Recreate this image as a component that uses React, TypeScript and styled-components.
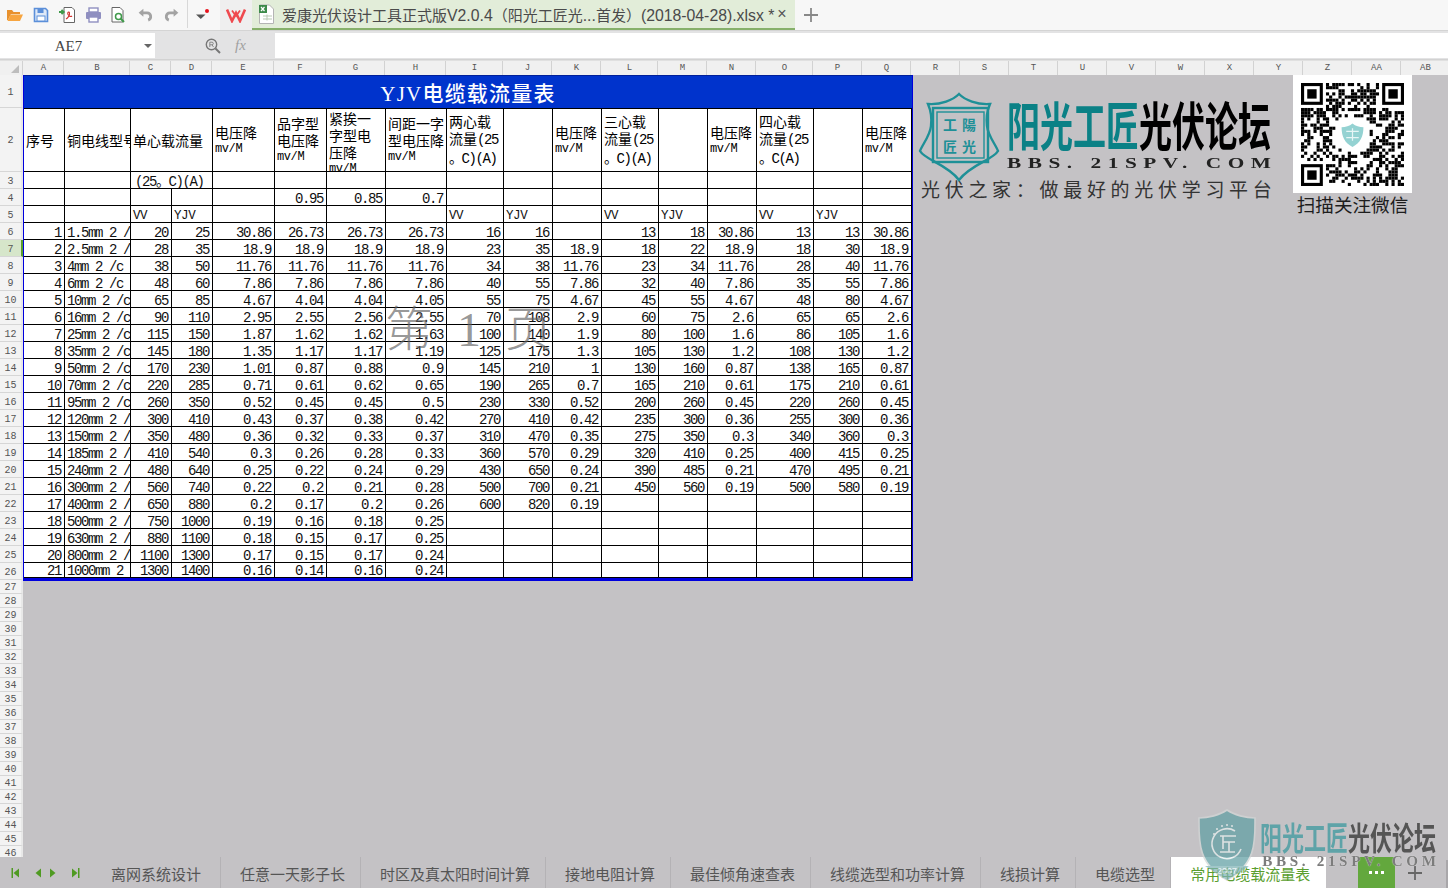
import { FC, ReactNode } from 'react';
import styled, { createGlobalStyle } from 'styled-components';

const CJK = '"Noto Sans CJK SC", "Liberation Sans", sans-serif';
const MONO = '"Liberation Mono", "Noto Sans CJK SC", monospace';
const CANVAS = '#c4c2c5';

const GlobalStyle = createGlobalStyle`
  html, body { margin: 0; padding: 0; overflow: hidden; background: ${CANVAS}; }
  * { box-sizing: border-box; }
`;

const Page = styled.div`
  position: relative;
  width: 1448px;
  height: 888px;
  display: flex;
  flex-direction: column;
  overflow: hidden;
  font-family: ${CJK};
`;

/* title bar */
const TitleBar = styled.div`
  height: 30px;
  flex: none;
  display: flex;
  align-items: stretch;
  padding-left: 2px;
  background: #f7f7f7;
`;

const IconSlot = styled.div<{ $wide?: boolean }>`
  width: ${(p) => (p.$wide ? 32 : 26)}px;
  display: flex;
  align-items: center;
  justify-content: center;
`;

const Separator = styled.div`
  width: 1px;
  margin: 0 0 2px 3px;
  background: #d8d8d8;
`;

const LogoSlot = styled.div`
  width: 32px;
  display: flex;
  align-items: center;
  justify-content: center;
  background: #efefef;
`;

const FileTab = styled.div`
  width: 543px;
  display: flex;
  align-items: center;
  padding-left: 6px;
  background: #e2edd9;
  border-bottom: 2px solid #86b06a;
`;

const FileName = styled.span`
  margin-left: 7px;
  font: 15px ${CJK};
  color: #4a4a4a;
  white-space: nowrap;
`;

const FileLatin = styled.span`
  font: 15.8px "Liberation Sans", sans-serif;
`;

const CloseMark = styled.span`
  margin-left: 3px;
  font: 16px "Liberation Sans", sans-serif;
  color: #555;
`;

const NewTab = styled.div`
  width: 32px;
  display: flex;
  align-items: center;
  justify-content: center;
`;

/* formula bar */
const FormulaBar = styled.div`
  height: 30px;
  flex: none;
  display: flex;
  padding: 2px 0 1px;
  background: #e3e3e4;
  border-top: 1px solid #d4d4d4;
  border-bottom: 1px solid #d2d2d2;
`;

const NameBox = styled.div`
  position: relative;
  width: 155px;
  background: #fff;
  text-align: center;
  padding-right: 18px;
  font: 15px/27px "Liberation Serif", serif;
  color: #444;
`;

const NameCaret = styled.span`
  position: absolute;
  right: 3px;
  top: 11px;
  border-left: 4px solid transparent;
  border-right: 4px solid transparent;
  border-top: 4px solid #666;
`;

const FormulaTools = styled.div`
  width: 120px;
  display: flex;
  align-items: center;
  padding-left: 50px;
  gap: 14px;
`;

const FxLabel = styled.span`
  font: italic 15px "Liberation Serif", serif;
  color: #a0a0a0;
`;

const FormulaInput = styled.div`
  flex: 1;
  background: #fff;
`;

/* sheet */
const HeaderRow = styled.div`
  height: 15px;
  flex: none;
  display: flex;
  overflow: hidden;
  background: #f0f0f0;
  border-top: 1px solid #e0e0e0;
`;

const Corner = styled.div`
  position: relative;
  width: 23px;
  flex: none;
  border-right: 1px solid #d2d2d2;
  &::after {
    content: '';
    position: absolute;
    right: 3px;
    bottom: 2px;
    border-left: 8px solid transparent;
    border-bottom: 8px solid #bdbdbd;
  }
`;

const ColumnLabel = styled.div<{ $width: number }>`
  width: ${(p) => p.$width}px;
  flex: none;
  padding-left: 1px;
  text-align: center;
  font: 9px/15px ${MONO};
  color: #555;
  border-right: 1px solid #d2d2d2;
`;

const SheetBody = styled.div`
  flex: 1;
  min-height: 0;
  display: flex;
`;

const Gutter = styled.div`
  width: 23px;
  flex: none;
  overflow: hidden;
  background: #f3f3f3;
`;

const RowLabel = styled.div<{ $height: number; $current?: boolean }>`
  height: ${(p) => p.$height}px;
  padding-top: 2px;
  display: flex;
  align-items: center;
  justify-content: center;
  font: 10px ${MONO};
  color: #555;
  background: ${(p) => (p.$current ? '#d6e6ca' : 'transparent')};
  border-bottom: 1px solid #d6d6d6;
  border-right: 2px solid ${(p) => (p.$current ? '#5aa02c' : '#e8e8e8')};
`;

const Canvas = styled.div`
  position: relative;
  flex: 1;
  overflow: hidden;
  background: ${CANVAS};
`;

const TableFrame = styled.div`
  width: 890px;
  background: #fff;
  border-left: 1px solid #0000dd;
  border-right: 2px solid #0000dd;
  border-bottom: 3px solid #0000dd;
`;

const Table = styled.table`
  width: 887px;
  table-layout: fixed;
  border-collapse: separate;
  border-spacing: 0;
  color: #000;
`;

const Row = styled.tr<{ $height: number }>`
  height: ${(p) => p.$height}px;
`;

const TitleCell = styled.td`
  height: 34px;
  padding: 0;
  text-align: center;
  vertical-align: middle;
  background: #0033cc;
  color: #fff;
  font: 500 21px "Liberation Serif", "Noto Sans CJK SC", serif;
  letter-spacing: 1.2px;
  border-top: 1px solid #00209a;
  border-bottom: 1px solid #000;
`;

const HeadCell = styled.td`
  padding: 0;
  border-right: 1px solid #000;
  border-bottom: 1px solid #000;
`;

const HeadBox = styled.div<{ $top?: boolean }>`
  height: 62px;
  padding: 1px 0 0 2px;
  display: flex;
  flex-direction: column;
  justify-content: ${(p) => (p.$top ? 'flex-start' : 'center')};
  overflow: hidden;
  white-space: nowrap;
  font: 14px/17px ${CJK};
`;

const Latin = styled.span`
  font-family: ${MONO};
  letter-spacing: -1.4px;
`;

const Unit = styled.span`
  font: 12px/17px ${MONO};
  letter-spacing: -0.4px;
`;

const Cell = styled.td<{ $align?: 'left' | 'right'; $indent?: number; $tag?: boolean }>`
  padding: 0 ${(p) => (p.$align === 'left' ? `0 0 ${p.$indent ?? 2}px` : '3px 0 0')};
  text-align: ${(p) => p.$align || 'right'};
  vertical-align: bottom;
  overflow: hidden;
  white-space: nowrap;
  font: ${(p) => (p.$tag ? 12.5 : 14)}px/12px ${MONO};
  letter-spacing: ${(p) => (p.$tag ? -0.4 : -1.4)}px;
  color: #111;
  border-right: 1px solid #000;
  border-bottom: 1px solid #000;
`;

/* free floating artwork on the canvas */
const BrandBlock = styled.div`
  position: absolute;
  left: 895px;
  top: 17px;
  width: 360px;
`;

const BrandRow = styled.div`
  display: flex;
  gap: 5px;
`;

const BrandText = styled.div`
  display: flex;
  flex-direction: column;
  padding-top: 4px;
`;

const BrandName = styled.div<{ $size: number }>`
  display: flex;
  height: ${(p) => Math.round(p.$size * 1.7)}px;
  align-items: center;
  font-size: ${(p) => p.$size}px;
  line-height: 1;
  font-weight: 700;
  white-space: nowrap;
`;

const BrandChars = styled.span<{ $color: string; $stretch: number }>`
  display: inline-block;
  color: ${(p) => p.$color};
  transform: scaleY(${(p) => p.$stretch});
`;

const BrandUrl = styled.div`
  margin-top: 4px;
  font: bold 15px/15px "Liberation Serif", serif;
  letter-spacing: 4.6px;
  white-space: nowrap;
  color: #222;
  transform: scaleX(1.42);
  transform-origin: left center;
`;

const Slogan = styled.div`
  margin: -5px 0 0 3px;
  font-size: 19px;
  line-height: 24px;
  letter-spacing: 4.7px;
  white-space: nowrap;
  color: #333;
`;

const QrBlock = styled.div`
  position: absolute;
  left: 1270px;
  top: 0;
  width: 119px;
  display: flex;
  flex-direction: column;
  align-items: center;
`;

const QrCard = styled.div`
  width: 119px;
  height: 118px;
  display: flex;
  align-items: center;
  justify-content: center;
  background: #fff;
`;

const QrCaption = styled.div`
  margin-top: -1px;
  font-size: 18.6px;
  line-height: 24px;
  white-space: nowrap;
  color: #1d1d1d;
`;

const PageMark = styled.div`
  position: absolute;
  left: 362px;
  top: 226px;
  font: 300 48px/58px "Liberation Serif", "Noto Sans CJK SC", serif;
  letter-spacing: 1px;
  word-spacing: 10px;
  white-space: nowrap;
  color: rgba(100, 100, 100, 0.68);
  pointer-events: none;
`;

/* sheet tabs */
const TabBar = styled.div`
  height: 31px;
  flex: none;
  display: flex;
  align-items: stretch;
  background: ${CANVAS};
`;

const TabNav = styled.div`
  width: 92px;
  flex: none;
  display: flex;
  align-items: center;
  padding-left: 11px;
  gap: 13px;
`;

const NavPair = styled.div`
  display: flex;
  gap: 7px;
`;

const SheetTab = styled.div<{ $active?: boolean }>`
  display: flex;
  align-items: center;
  padding: 1px 15px 0 19px;
  font-size: 15px;
  white-space: nowrap;
  color: ${(p) => (p.$active ? '#5a9e2f' : '#555')};
  background: ${(p) => (p.$active ? '#fff' : 'transparent')};
  border-right: 1px solid ${(p) => (p.$active ? '#fff' : '#b4b2b5')};

  ${TabNav} + & {
    padding-right: 19px;
  }
`;

const MoreButton = styled.div`
  width: 37px;
  margin-left: 32px;
  display: flex;
  align-items: center;
  justify-content: center;
  gap: 3px;
  background: #63a83d;
`;

const MoreDot = styled.span`
  width: 3px;
  height: 3px;
  background: #fff;
`;

const AddSheet = styled.div`
  width: 40px;
  display: flex;
  align-items: center;
  justify-content: center;
`;

const ScrollEdge = styled.div`
  width: 2px;
  margin: 3px 0 0 11px;
  background: #a9a7aa;
`;

const Watermark = styled.div`
  position: absolute;
  left: 1197px;
  top: 809px;
  display: flex;
  gap: 3px;
  pointer-events: none;
`;

const WatermarkMark = styled.div`
  opacity: 0.72;
`;

const WatermarkText = styled.div`
  padding-top: 8px;
  display: flex;
  flex-direction: column;
`;

const WatermarkUrl = styled.div`
  margin-top: 1px;
  padding-left: 2px;
  font: bold 14px/14px "Liberation Serif", serif;
  letter-spacing: 3.4px;
  white-space: nowrap;
  color: #7c7c7c;
  text-shadow: 0 0 1px #f2f2f2;
  transform: scaleX(1.08);
  transform-origin: left center;
`;

/* data */
const widths = [41, 66, 41, 41, 62, 52, 59, 61, 57, 49, 49, 57, 49, 49, 57, 49, 49];
const letters = 'ABCDEFGHIJKLMNOPQRSTUVWXYZ'.split('').concat('AA', 'AB');
const columnWidths = letters.map((_, i) => widths[i] ?? 49);

const rowLabels = Array.from({ length: 46 }, (_, i) => {
  const n = i + 1;
  if (n === 1) return { n, h: 33 };
  if (n === 2) return { n, h: 64 };
  return { n, h: n <= 26 ? 17 : 14 };
});

const rows: string[][] = [
  ['1', '1.5mm 2 /', '20', '25', '30.86', '26.73', '26.73', '26.73', '16', '16', '', '13', '18', '30.86', '13', '13', '30.86'],
  ['2', '2.5mm 2 /', '28', '35', '18.9', '18.9', '18.9', '18.9', '23', '35', '18.9', '18', '22', '18.9', '18', '30', '18.9'],
  ['3', '4mm 2 /c', '38', '50', '11.76', '11.76', '11.76', '11.76', '34', '38', '11.76', '23', '34', '11.76', '28', '40', '11.76'],
  ['4', '6mm 2 /c', '48', '60', '7.86', '7.86', '7.86', '7.86', '40', '55', '7.86', '32', '40', '7.86', '35', '55', '7.86'],
  ['5', '10mm 2 /c', '65', '85', '4.67', '4.04', '4.04', '4.05', '55', '75', '4.67', '45', '55', '4.67', '48', '80', '4.67'],
  ['6', '16mm 2 /c', '90', '110', '2.95', '2.55', '2.56', '2.55', '70', '108', '2.9', '60', '75', '2.6', '65', '65', '2.6'],
  ['7', '25mm 2 /c', '115', '150', '1.87', '1.62', '1.62', '1.63', '100', '140', '1.9', '80', '100', '1.6', '86', '105', '1.6'],
  ['8', '35mm 2 /c', '145', '180', '1.35', '1.17', '1.17', '1.19', '125', '175', '1.3', '105', '130', '1.2', '108', '130', '1.2'],
  ['9', '50mm 2 /c', '170', '230', '1.01', '0.87', '0.88', '0.9', '145', '210', '1', '130', '160', '0.87', '138', '165', '0.87'],
  ['10', '70mm 2 /c', '220', '285', '0.71', '0.61', '0.62', '0.65', '190', '265', '0.7', '165', '210', '0.61', '175', '210', '0.61'],
  ['11', '95mm 2 /c', '260', '350', '0.52', '0.45', '0.45', '0.5', '230', '330', '0.52', '200', '260', '0.45', '220', '260', '0.45'],
  ['12', '120mm 2 /', '300', '410', '0.43', '0.37', '0.38', '0.42', '270', '410', '0.42', '235', '300', '0.36', '255', '300', '0.36'],
  ['13', '150mm 2 /', '350', '480', '0.36', '0.32', '0.33', '0.37', '310', '470', '0.35', '275', '350', '0.3', '340', '360', '0.3'],
  ['14', '185mm 2 /', '410', '540', '0.3', '0.26', '0.28', '0.33', '360', '570', '0.29', '320', '410', '0.25', '400', '415', '0.25'],
  ['15', '240mm 2 /', '480', '640', '0.25', '0.22', '0.24', '0.29', '430', '650', '0.24', '390', '485', '0.21', '470', '495', '0.21'],
  ['16', '300mm 2 /', '560', '740', '0.22', '0.2', '0.21', '0.28', '500', '700', '0.21', '450', '560', '0.19', '500', '580', '0.19'],
  ['17', '400mm 2 /', '650', '880', '0.2', '0.17', '0.2', '0.26', '600', '820', '0.19', '', '', '', '', '', ''],
  ['18', '500mm 2 /', '750', '1000', '0.19', '0.16', '0.18', '0.25', '', '', '', '', '', '', '', '', ''],
  ['19', '630mm 2 /', '880', '1100', '0.18', '0.15', '0.17', '0.25', '', '', '', '', '', '', '', '', ''],
  ['20', '800mm 2 /', '1100', '1300', '0.17', '0.15', '0.17', '0.24', '', '', '', '', '', '', '', '', ''],
  ['21', '1000mm 2', '1300', '1400', '0.16', '0.14', '0.16', '0.24', '', '', '', '', '', '', '', '', ''],
];

const blank = (n: number) => Array.from({ length: n }, () => '');
const row4 = [...blank(5), '0.95', '0.85', '0.7', ...blank(9)];
const row5 = ['', '', 'VV', 'YJV', '', '', '', '', 'VV', 'YJV', '', 'VV', 'YJV', '', 'VV', 'YJV', ''];

const sheetTabs = ['离网系统设计', '任意一天影子长', '时区及真太阳时间计算', '接地电阻计算', '最佳倾角速查表', '线缆选型和功率计算', '线损计算', '电缆选型'];

const drop = <Unit>mv/M</Unit>;
const loadHead = (word: string, tail: string) => (
  <>
    <div>{word}心载</div>
    <div>流量<Latin>(25</Latin></div>
    <div><Latin>。{tail}</Latin></div>
  </>
);

const headers: { span?: number; top?: boolean; body: ReactNode }[] = [
  { body: <div>序号</div> },
  { body: <div>铜电线型号</div> },
  { span: 2, body: <div>单心载流量</div> },
  { body: <><div>电压降</div>{drop}</> },
  { body: <><div>品字型</div><div>电压降</div>{drop}</> },
  { top: true, body: <><div>紧挨一</div><div>字型电</div><div>压降</div>{drop}</> },
  { body: <><div>间距一字</div><div>型电压降</div>{drop}</> },
  { body: loadHead('两', 'C)(A)') },
  { body: null },
  { body: <><div>电压降</div>{drop}</> },
  { body: loadHead('三', 'C)(A)') },
  { body: null },
  { body: <><div>电压降</div>{drop}</> },
  { body: loadHead('四', 'C(A)') },
  { body: null },
  { body: <><div>电压降</div>{drop}</> },
];

/* icons */
const FolderIcon: FC = () => (
  <svg width="18" height="16" viewBox="0 0 18 16">
    <path d="M1 3h5l1.5 2H14v2H5L2 13H1z" fill="#e8912e" />
    <path d="M4.5 7.5H17L14 14H1.5z" fill="#f7a540" />
  </svg>
);

const SaveIcon: FC = () => (
  <svg width="16" height="16" viewBox="0 0 16 16">
    <path d="M1.5 1.5h11l2 2v11h-13z" fill="#dfe9f7" stroke="#5b8fd9" strokeWidth="1.6" />
    <rect x="4.5" y="2" width="6" height="4" fill="#5b8fd9" />
    <rect x="4" y="9" width="8" height="5" fill="#fff" stroke="#5b8fd9" />
  </svg>
);

const ExportIcon: FC = () => (
  <svg width="18" height="18" viewBox="0 0 18 18">
    <path d="M6 1.5h8l2.5 2.5v12.5H6z" fill="#fff" stroke="#666" />
    <path d="M1 6h4M3.5 3.8 5.8 6 3.5 8.2" fill="none" stroke="#3f9a4a" strokeWidth="1.8" />
    <path d="M8 13c2-1 4-4 3.5-6-.5-2-2.5-.5-1.500 1.500s3 2.500 4 1.500" fill="none" stroke="#d3322f" strokeWidth="1.1" />
  </svg>
);

const PrintIcon: FC = () => (
  <svg width="17" height="16" viewBox="0 0 17 16">
    <rect x="4" y="1" width="9" height="4" fill="#fff" stroke="#8f8fc0" strokeWidth="1.4" />
    <rect x="1" y="5" width="15" height="7" rx="1" fill="#8f8fc0" />
    <rect x="4" y="10" width="9" height="5" fill="#fff" stroke="#8f8fc0" strokeWidth="1.4" />
  </svg>
);

const PreviewIcon: FC = () => (
  <svg width="18" height="18" viewBox="0 0 18 18">
    <path d="M2 1.5h8l3 3V16H2z" fill="#fff" stroke="#666" />
    <circle cx="8.5" cy="10.5" r="3" fill="#fff" stroke="#3f9a4a" strokeWidth="1.5" />
    <path d="m10.5 12.500 3.500 3.500" stroke="#3f9a4a" strokeWidth="2" />
  </svg>
);

const UndoIcon: FC<{ $flip?: boolean }> = ({ $flip }) => (
  <svg width="15" height="15" viewBox="0 0 14 14" style={$flip ? { transform: 'scaleX(-1)' } : undefined}>
    <path d="M3 4.5h5.500a3.500 3.500 0 0 1 1 6.800" fill="none" stroke="#a3a3a3" strokeWidth="2.600" />
    <path d="M5 .8v7.400L.6 4.500z" fill="#a3a3a3" />
  </svg>
);

const DropIcon: FC = () => (
  <svg width="16" height="14" viewBox="0 0 16 14">
    <path d="M0 6.500h9.500L4.800 11z" fill="#555" />
    <circle cx="11" cy="3" r="2" fill="#e8121d" />
  </svg>
);

const WpsLogo: FC = () => (
  <svg width="20" height="15" viewBox="0 0 20 15">
    <path d="M1 1.500 6 13l4-8 4 8 5-11.500" fill="none" stroke="#ef4a4f" strokeWidth="2.600" />
    <path d="m6 2.500 4 5.500 4-5.500" fill="none" stroke="#ef4a4f" strokeWidth="1.800" />
  </svg>
);

const ExcelIcon: FC = () => (
  <svg width="17" height="20" viewBox="0 0 17 20">
    <path d="M1.500 1h10l4 4v14.500h-14z" fill="#fff" stroke="#b4b4b4" />
    <rect x="1" y="1" width="8" height="8" fill="#3d8a4a" />
    <path d="m3 3 3.500 4M6.500 3 3 7" stroke="#fff" strokeWidth="1.200" />
    <path d="M5 12h9M5 15h9M9 10.500v6" stroke="#b9c9b4" />
  </svg>
);

const PlusIcon: FC<{ size: number; color: string }> = ({ size, color }) => (
  <svg width={size} height={size} viewBox="0 0 14 14">
    <path d="M7 0v14M0 7h14" stroke={color} strokeWidth="1.800" />
  </svg>
);

const FindIcon: FC = () => (
  <svg width="16" height="16" viewBox="0 0 16 16">
    <circle cx="6.500" cy="6.500" r="5.200" fill="none" stroke="#777" strokeWidth="1.400" />
    <path d="m10.500 10.500 4.500 4.500" stroke="#777" strokeWidth="2" />
    <path d="M4.800 9V4.200h2.200a1.300 1.300 0 0 1 0 2.600H5m2 0L8.500 9" fill="none" stroke="#888" />
  </svg>
);

const NavArrow: FC<{ left?: boolean; bar?: boolean }> = ({ left, bar }) => (
  <svg width="9" height="12" viewBox="0 0 9 12" style={left ? { transform: 'scaleX(-1)' } : undefined}>
    <path d="M1 1.500 6.500 6 1 10.500z" fill="#4f9a22" />
    {bar && <rect x="7" y="1" width="1.500" height="10" fill="#4f9a22" />}
  </svg>
);

const Shield: FC = () => (
  <svg width="84" height="90" viewBox="0 0 84 90">
    <path
      d="M41 2c-6 6-18 11-31 10 3 7 4 14 3 22-1 10-9 19-11 25 5 9 27 13 39 29 12-16 34-20 39-29-2-6-10-15-11-25-1-8 0-15 3-22-13 1-25-4-31-10z"
      fill="none"
      stroke="#1e9097"
      strokeWidth="2.400"
    />
    <rect x="15" y="16" width="55" height="54" fill="none" stroke="#1e9097" strokeWidth="2.400" />
    <rect x="19" y="20" width="47" height="46" fill="none" stroke="#1e9097" strokeWidth="1.400" />
    <text x="25" y="38" fontSize="14" fontWeight="700" fill="#1e9097" fontFamily={CJK}>工</text>
    <text x="44" y="38" fontSize="14" fontWeight="700" fill="#1e9097" fontFamily={CJK}>陽</text>
    <text x="25" y="60" fontSize="14" fontWeight="700" fill="#1e9097" fontFamily={CJK}>匠</text>
    <text x="44" y="60" fontSize="14" fontWeight="700" fill="#1e9097" fontFamily={CJK}>光</text>
  </svg>
);

const WatermarkShield: FC = () => (
  <svg width="60" height="72" viewBox="0 0 60 72">
    <path d="M30 1C23 6 11 9 2 9c0 22-2 46 28 62 30-16 28-40 28-62-9 0-21-3-28-8z" fill="#5f9fa3" stroke="#d2d6d6" strokeWidth="1.6" />
    <path d="M8 57h44L30 71z" fill="#7eb2b5" />
    <path d="M38 22a15 15 0 1 0 6 18" fill="none" stroke="#e6eeee" strokeWidth="1.6" />
    {[[17, 25], [20, 20], [25, 17], [30, 16], [35, 17]].map(([x, y]) => (
      <circle key={x} cx={x} cy={y} r="1" fill="#e6eeee" />
    ))}
    <path d="M23 27h16M26 27v13M26 33h12M32 33v10M23 43h15" fill="none" stroke="#e6eeee" strokeWidth="1.6" />
    <text x="30" y="65" textAnchor="middle" fontSize="9" fill="#eef4f4" fontFamily="Liberation Sans, sans-serif">2007</text>
  </svg>
);

/* a stand-in module pattern, fixed by a seed so each run draws the same */
const QR_SIZE = 33;
const isFinder = (x: number, y: number) => (x < 8 && y < 8) || (x >= QR_SIZE - 8 && y < 8) || (x < 8 && y >= QR_SIZE - 8);
const qrModules = (() => {
  const out: [number, number][] = [];
  let seed = 20180428;
  for (let y = 0; y < QR_SIZE; y++) {
    for (let x = 0; x < QR_SIZE; x++) {
      seed = (seed * 1103515245 + 12345) & 0x7fffffff;
      const center = Math.hypot(x - 16, y - 16) < 6;
      if (!isFinder(x, y) && !center && (seed >> 16) % 100 < 54) out.push([x, y]);
    }
  }
  return out;
})();

const Finder: FC<{ x: number; y: number }> = ({ x, y }) => (
  <g>
    <rect x={x + 0.5} y={y + 0.5} width="6" height="6" fill="none" stroke="#000" />
    <rect x={x + 2} y={y + 2} width="3" height="3" fill="#000" />
  </g>
);

const QrCode: FC = () => (
  <svg width="103" height="103" viewBox="0 0 33 33" style={{ filter: 'blur(0.6px)' }}>
    {qrModules.map(([x, y]) => (
      <rect key={`${x}-${y}`} x={x} y={y} width="1" height="1" fill="#000" />
    ))}
    <Finder x={0} y={0} />
    <Finder x={26} y={0} />
    <Finder x={0} y={26} />
    <path d="M16.5 13c1 .8 2.200 1.200 3.500 1.200 0 3-1 5-3.500 6.300-2.500-1.300-3.500-3.300-3.500-6.300 1.300 0 2.500-.4 3.500-1.200z" fill="#94d2d2" />
    <path d="M14.500 15.500h4M14.500 17.500h4M16.500 14.500v4" stroke="#e8f6f6" strokeWidth="0.4" />
  </svg>
);

const App: FC = () => (
  <Page>
    <GlobalStyle />
    <TitleBar>
      <IconSlot><FolderIcon /></IconSlot>
      <IconSlot><SaveIcon /></IconSlot>
      <IconSlot><ExportIcon /></IconSlot>
      <IconSlot><PrintIcon /></IconSlot>
      <IconSlot><PreviewIcon /></IconSlot>
      <IconSlot><UndoIcon /></IconSlot>
      <IconSlot><UndoIcon $flip /></IconSlot>
      <Separator />
      <IconSlot $wide><DropIcon /></IconSlot>
      <LogoSlot><WpsLogo /></LogoSlot>
      <FileTab>
        <ExcelIcon />
        <FileName>
          爱康光伏设计工具正式版<FileLatin>V2.0.4</FileLatin>（阳光工匠光<FileLatin>...</FileLatin>首发）<FileLatin>(2018-04-28).xlsx *</FileLatin>
        </FileName>
        <CloseMark>×</CloseMark>
      </FileTab>
      <NewTab><PlusIcon size={14} color="#888" /></NewTab>
    </TitleBar>

    <FormulaBar>
      <NameBox>AE7<NameCaret /></NameBox>
      <FormulaTools>
        <FindIcon />
        <FxLabel>fx</FxLabel>
      </FormulaTools>
      <FormulaInput />
    </FormulaBar>

    <HeaderRow>
      <Corner />
      {letters.map((l, i) => (
        <ColumnLabel key={l} $width={columnWidths[i]}>{l}</ColumnLabel>
      ))}
    </HeaderRow>

    <SheetBody>
      <Gutter>
        {rowLabels.map((r) => (
          <RowLabel key={r.n} $height={r.h} $current={r.n === 7}>{r.n}</RowLabel>
        ))}
      </Gutter>
      <Canvas>
        <TableFrame>
          <Table>
            <colgroup>
              {widths.map((w, i) => (
                <col key={i} style={{ width: w }} />
              ))}
            </colgroup>
            <tbody>
              <Row $height={34}>
                <TitleCell colSpan={17}>YJV电缆载流量表</TitleCell>
              </Row>
              <Row $height={63}>
                {headers.map((h, i) => (
                  <HeadCell key={i} colSpan={h.span}>
                    <HeadBox $top={h.top}>{h.body}</HeadBox>
                  </HeadCell>
                ))}
              </Row>
              <Row $height={17}>
                <Cell />
                <Cell />
                <Cell colSpan={2} $align="left" $indent={4}>(25。C)(A)</Cell>
                {blank(13).map((_, i) => <Cell key={i} />)}
              </Row>
              <Row $height={17}>
                {row4.map((v, i) => <Cell key={i}>{v}</Cell>)}
              </Row>
              <Row $height={17}>
                {row5.map((v, i) => <Cell key={i} $align="left" $tag>{v}</Cell>)}
              </Row>
              {rows.map((r, ri) => (
                <Row key={r[0]} $height={ri === rows.length - 1 ? 15 : 17}>
                  {r.map((v, i) => (
                    <Cell key={i} $align={i === 1 ? 'left' : 'right'}>{v}</Cell>
                  ))}
                </Row>
              ))}
            </tbody>
          </Table>
        </TableFrame>

        <PageMark>第 1 页</PageMark>

        <BrandBlock>
          <BrandRow>
            <Shield />
            <BrandText>
              <BrandName $size={33}>
                <BrandChars $color="#0b8186" $stretch={1.6}>阳光工匠</BrandChars>
                <BrandChars $color="#000" $stretch={1.6}>光伏论坛</BrandChars>
              </BrandName>
              <BrandUrl>BBS. 21SPV. COM</BrandUrl>
            </BrandText>
          </BrandRow>
          <Slogan>光伏之家：做最好的光伏学习平台</Slogan>
        </BrandBlock>

        <QrBlock>
          <QrCard><QrCode /></QrCard>
          <QrCaption>扫描关注微信</QrCaption>
        </QrBlock>
      </Canvas>
    </SheetBody>

    <TabBar>
      <TabNav>
        <NavArrow left bar />
        <NavPair>
          <NavArrow left />
          <NavArrow />
        </NavPair>
        <NavArrow bar />
      </TabNav>
      {sheetTabs.map((t) => <SheetTab key={t}>{t}</SheetTab>)}
      <SheetTab $active>常用电缆载流量表</SheetTab>
      <MoreButton><MoreDot /><MoreDot /><MoreDot /></MoreButton>
      <AddSheet><PlusIcon size={14} color="#666" /></AddSheet>
      <ScrollEdge />
    </TabBar>

    <Watermark>
      <WatermarkMark><WatermarkShield /></WatermarkMark>
      <WatermarkText>
        <BrandName $size={22}>
          <BrandChars $color="#5ea3a8" $stretch={1.45}>阳光工匠</BrandChars>
          <BrandChars $color="#555" $stretch={1.45}>光伏论坛</BrandChars>
        </BrandName>
        <WatermarkUrl>BBS. 21SPV. COM</WatermarkUrl>
      </WatermarkText>
    </Watermark>
  </Page>
);

export default App;
